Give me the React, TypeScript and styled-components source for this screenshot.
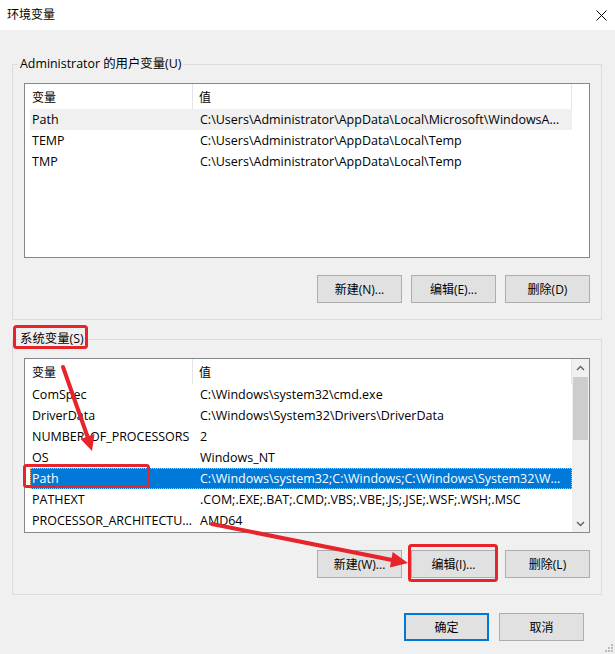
import React from "react";
import styled, { createGlobalStyle } from "styled-components";

const Global = createGlobalStyle`
  html, body { margin: 0; padding: 0; background: #f0f0f0; }
  * { box-sizing: border-box; }
`;

const FONT = `"Open Sans", "Noto Sans CJK SC", sans-serif`;

const Window = styled.div`
  position: relative;
  width: 615px;
  height: 654px;
  background: #f0f0f0;
  display: flex;
  flex-direction: column;
  font-family: ${FONT};
  font-size: 12px;
  color: #000;
  overflow: hidden;
`;

const TitleBar = styled.div`
  height: 30px;
  flex: none;
  background: #fff;
  display: flex;
  align-items: center;
  justify-content: space-between;
  padding: 0 8px 0 7px;
`;

const Title = styled.span`
  font-size: 12px;
  line-height: 16px;
`;

const Body = styled.div`
  padding: 26px 13px 0 12px;
  display: flex;
  flex-direction: column;
`;

const Group = styled.fieldset<{ $top?: number }>`
  margin: ${(p) => p.$top ?? 0}px 0 0 0;
  border: 1px solid #dcdcdc;
  padding: 11px 11px 16px 11px;
  min-width: 0;
`;

const Legend = styled.legend`
  padding: 0 2px;
  margin-left: -6px;
  line-height: 16px;
  font-size: 12.4px;
`;

const List = styled.div`
  height: 175px;
  border: 1px solid #828790;
  background: #fff;
  display: flex;
  overflow: hidden;
`;

const ListMain = styled.div`
  flex: 1;
  display: flex;
  flex-direction: column;
  min-width: 0;
`;

const HeaderRow = styled.div`
  display: flex;
  height: 25px;
  flex: none;
`;

const HeaderCell = styled.div<{ $w: number; $pad: number }>`
  width: ${(p) => p.$w}px;
  padding-left: ${(p) => p.$pad}px;
  display: flex;
  align-items: center;
  border-right: 1px solid #e5e5e5;
  white-space: nowrap;
`;

const Row = styled.div<{ $state?: "active" | "inactive" }>`
  display: flex;
  height: 21px;
  width: 542px;
  margin-left: 5px;
  align-items: center;
  background: ${(p) =>
    p.$state === "active" ? "#0078d7" : p.$state === "inactive" ? "#f0f0f0" : "transparent"};
  color: ${(p) => (p.$state === "active" ? "#fff" : "#000")};
  outline: ${(p) => (p.$state === "active" ? "1px dotted #f7b57a" : "none")};
  outline-offset: -1px;
`;

const Cell = styled.div<{ $w: number; $pad: number; $padR: number }>`
  width: ${(p) => p.$w}px;
  flex: none;
  padding-left: ${(p) => p.$pad}px;
  padding-right: ${(p) => p.$padR}px;
  white-space: nowrap;
  overflow: hidden;
  text-overflow: ellipsis;
  line-height: 16px;
  font-size: 12.5px;
`;

const ScrollBar = styled.div`
  width: 17px;
  flex: none;
  background: #f0f0f0;
  display: flex;
  flex-direction: column;
`;

const ScrollArrow = styled.div`
  height: 17px;
  flex: none;
  display: flex;
  align-items: center;
  justify-content: center;
`;

const ScrollTrack = styled.div`
  flex: 1;
  padding-top: 1px;
`;

const Thumb = styled.div`
  height: 63px;
  margin: 0 1px;
  background: #cdcdcd;
`;

const ButtonRow = styled.div<{ $top: number; $right?: number; $gap: number }>`
  display: flex;
  justify-content: flex-end;
  gap: ${(p) => p.$gap}px;
  margin-top: ${(p) => p.$top}px;
  padding-right: ${(p) => p.$right ?? 0}px;
`;

const Button = styled.div<{ $default?: boolean }>`
  width: 85px;
  height: 28px;
  display: flex;
  align-items: center;
  justify-content: center;
  background: #e1e1e1;
  border: ${(p) => (p.$default ? "2px solid #0078d7" : "1px solid #adadad")};
  font-size: 12px;
  white-space: nowrap;
`;

const Overlay = styled.svg`
  position: absolute;
  left: 0;
  top: 0;
  pointer-events: none;
`;

const Grip = styled.svg`
  position: absolute;
  right: 2px;
  bottom: 2px;
`;

type Item = { name: string; value: string; state?: "active" | "inactive" };

const userVars: Item[] = [
  {
    name: "Path",
    value: "C:\\Users\\Administrator\\AppData\\Local\\Microsoft\\WindowsApps;",
    state: "inactive",
  },
  { name: "TEMP", value: "C:\\Users\\Administrator\\AppData\\Local\\Temp" },
  { name: "TMP", value: "C:\\Users\\Administrator\\AppData\\Local\\Temp" },
];

const sysVars: Item[] = [
  { name: "ComSpec", value: "C:\\Windows\\system32\\cmd.exe" },
  { name: "DriverData", value: "C:\\Windows\\System32\\Drivers\\DriverData" },
  { name: "NUMBER_OF_PROCESSORS", value: "2" },
  { name: "OS", value: "Windows_NT" },
  {
    name: "Path",
    value: "C:\\Windows\\system32;C:\\Windows;C:\\Windows\\System32\\Wbem;C:\\Windows",
    state: "active",
  },
  { name: "PATHEXT", value: ".COM;.EXE;.BAT;.CMD;.VBS;.VBE;.JS;.JSE;.WSF;.WSH;.MSC" },
  { name: "PROCESSOR_ARCHITECTURE", value: "AMD64" },
];

const Chevron = ({ up }: { up?: boolean }) => (
  <svg width="9" height="6" viewBox="0 0 9 6">
    <path
      d={up ? "M1 5 L4.5 1.5 L8 5" : "M1 1 L4.5 4.5 L8 1"}
      fill="none"
      stroke="#606060"
      strokeWidth="1.4"
    />
  </svg>
);

const VarList = ({ items, scroll }: { items: Item[]; scroll?: boolean }) => (
  <List>
    <ListMain>
      <HeaderRow>
        <HeaderCell $w={168} $pad={7}>变量</HeaderCell>
        <HeaderCell $w={379} $pad={6}>值</HeaderCell>
      </HeaderRow>
      {items.map((it) => (
        <Row key={it.name} $state={it.state}>
          <Cell $w={163} $pad={2} $padR={0}>{it.name}</Cell>
          <Cell $w={379} $pad={7} $padR={9}>{it.value}</Cell>
        </Row>
      ))}
    </ListMain>
    {scroll && (
      <ScrollBar>
        <ScrollArrow>
          <Chevron up />
        </ScrollArrow>
        <ScrollTrack>
          <Thumb />
        </ScrollTrack>
        <ScrollArrow>
          <Chevron />
        </ScrollArrow>
      </ScrollBar>
    )}
  </List>
);

const RED = "#e8242b";

export default function App() {
  return (
    <Window>
      <Global />
      <TitleBar>
        <Title>环境变量</Title>
        <svg width="11" height="11" viewBox="0 0 11 11">
          <path d="M0.5 0.5 L10.5 10.5 M10.5 0.5 L0.5 10.5" stroke="#000" strokeWidth="1" />
        </svg>
      </TitleBar>
      <Body>
        <Group>
          <Legend>Administrator 的用户变量(U)</Legend>
          <VarList items={userVars} />
          <ButtonRow $top={17} $gap={9}>
            <Button>新建(N)...</Button>
            <Button>编辑(E)...</Button>
            <Button>删除(D)</Button>
          </ButtonRow>
        </Group>
        <Group $top={11}>
          <Legend>系统变量(S)</Legend>
          <VarList items={sysVars} scroll />
          <ButtonRow $top={17} $gap={9}>
            <Button>新建(W)...</Button>
            <Button>编辑(I)...</Button>
            <Button>删除(L)</Button>
          </ButtonRow>
        </Group>
      </Body>
      <ButtonRow $top={18} $right={31} $gap={10}>
        <Button $default>确定</Button>
        <Button>取消</Button>
      </ButtonRow>
      <Grip width="10" height="10" viewBox="0 0 10 10">
        {[
          [8, 2],
          [5, 5],
          [8, 5],
          [2, 8],
          [5, 8],
          [8, 8],
        ].map(([x, y]) => (
          <rect key={`${x}-${y}`} x={x} y={y} width="2" height="2" fill="#bcbcbc" />
        ))}
      </Grip>
      <Overlay width="615" height="654" viewBox="0 0 615 654">
        <rect x="14.5" y="326.5" width="72" height="21" rx="2" fill="none" stroke={RED} strokeWidth="3" />
        <rect x="24.5" y="465.5" width="124" height="21" rx="2" fill="none" stroke={RED} strokeWidth="3" />
        <rect x="409.5" y="545.5" width="87" height="35" rx="2" fill="none" stroke={RED} strokeWidth="3" />
        <line x1="63" y1="367" x2="88" y2="438" stroke={RED} strokeWidth="4" strokeLinecap="round" />
        <polygon points="92,451 94.5,434 80.5,439" fill={RED} />
        <line x1="212" y1="524" x2="392" y2="560" stroke={RED} strokeWidth="4" strokeLinecap="round" />
        <polygon points="408,563 392.7,552 389.9,567.5" fill={RED} />
      </Overlay>
    </Window>
  );
}
